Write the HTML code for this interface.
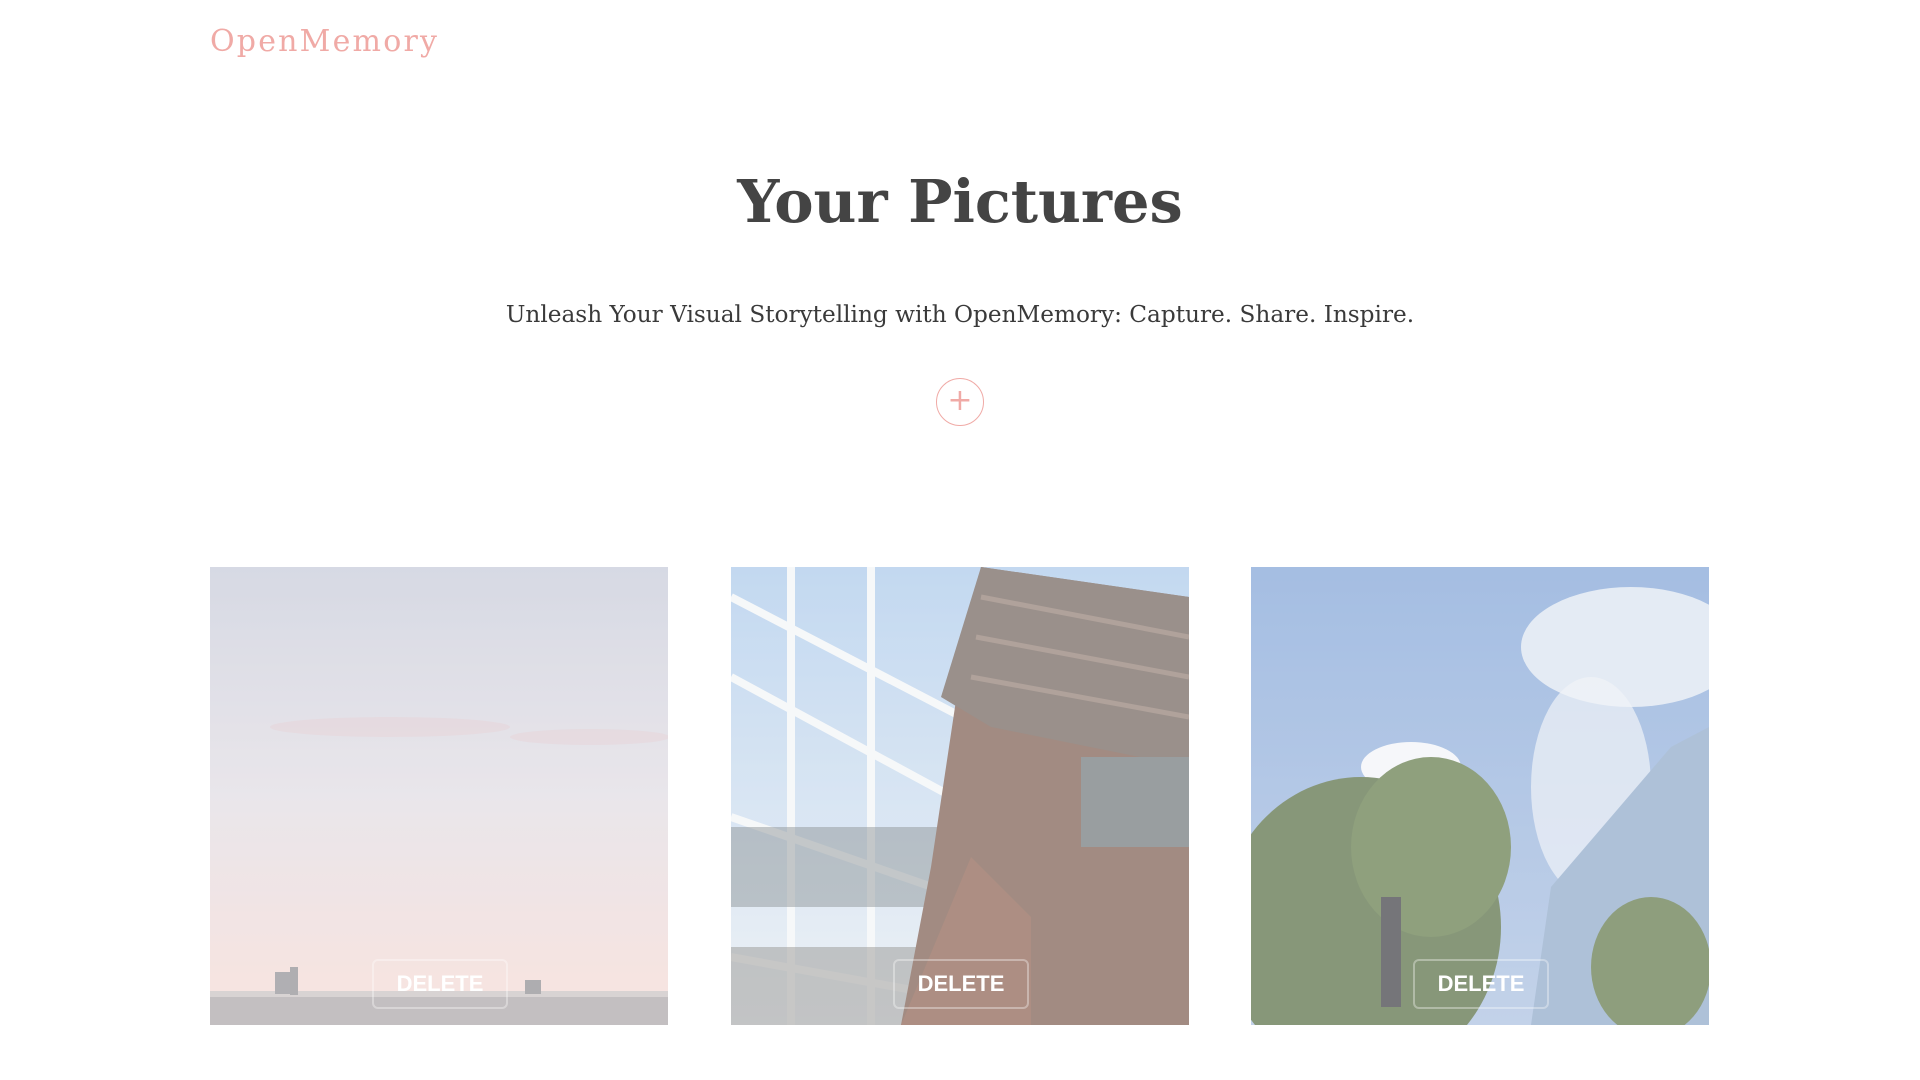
<!DOCTYPE html>
<html><head><meta charset="utf-8"><style>
html,body{margin:0;padding:0;background:#fff;width:1920px;height:1080px;overflow:hidden}
body{font-family:"DejaVu Serif","Liberation Serif",serif;position:relative}
.logo{position:absolute;left:210px;top:20px;font-size:30px;color:#f0aaa6;letter-spacing:2.2px;line-height:44px}
h1{position:absolute;left:0;width:1920px;top:160px;margin:0;text-align:center;font-size:59px;font-weight:bold;color:#444;line-height:84px}
.sub{position:absolute;left:0;width:1920px;top:297px;text-align:center;font-size:23.2px;color:#3a3a3a;line-height:36px}
.plus{position:absolute;left:936px;top:378px;width:46px;height:46px;border:1px solid #f0aaa6;border-radius:50%;color:#f0aaa6;font-size:30px;line-height:44px;text-align:center;font-family:"DejaVu Sans",sans-serif}
.card{position:absolute;top:567px;width:458px;height:458px;overflow:hidden}
.card svg{position:absolute;left:0;top:0}
.card .fade{position:absolute;inset:0;background:rgba(255,255,255,0.3)}
.del{position:absolute;left:162px;top:392px;width:132px;height:46px;border:2px solid rgba(255,255,255,0.35);border-radius:6px;color:#fff;font-family:"Liberation Sans",sans-serif;font-weight:bold;font-size:22px;line-height:46px;text-align:center}
</style></head><body>
<div class="logo">OpenMemory</div>
<h1>Your Pictures</h1>
<div class="sub">Unleash Your Visual Storytelling with OpenMemory: Capture. Share. Inspire.</div>
<div class="plus">+</div>

<div class="card" style="left:210px">
<svg width="458" height="458"><defs><linearGradient id="g1" x1="0" y1="0" x2="0" y2="1"><stop offset="0" stop-color="#c5c9d8"/><stop offset="0.5" stop-color="#e0dbe2"/><stop offset="0.9" stop-color="#f2d8d4"/></linearGradient></defs>
<rect width="458" height="458" fill="url(#g1)"/>
<ellipse cx="180" cy="160" rx="120" ry="10" fill="#dcc4cc" opacity="0.6"/>
<ellipse cx="380" cy="170" rx="80" ry="8" fill="#dcc4cc" opacity="0.6"/>
<rect x="0" y="428" width="458" height="30" fill="#a9a4a6"/>
<rect x="0" y="424" width="458" height="6" fill="#c7c0c1"/>
<rect x="65" y="405" width="22" height="22" fill="#8f8d92"/><rect x="80" y="400" width="8" height="28" fill="#8d8b90"/>
<rect x="315" y="413" width="16" height="14" fill="#8b8a8f"/>
</svg><div class="fade"></div><div class="del">DELETE</div></div>

<div class="card" style="left:731px">
<svg width="458" height="458"><defs><linearGradient id="g2" x1="0" y1="0" x2="0" y2="1"><stop offset="0" stop-color="#a9c8ea"/><stop offset="1" stop-color="#e6ecf2"/></linearGradient></defs>
<rect width="458" height="458" fill="url(#g2)"/>
<g stroke="#f3f5f7" stroke-width="8" fill="none"><path d="M0 30 L250 160"/><path d="M0 110 L240 240"/><path d="M0 250 L230 330"/><path d="M0 390 L220 430"/><path d="M60 0 V458"/><path d="M140 0 V458"/></g>
<rect x="0" y="260" width="220" height="80" fill="#5f6a6e" opacity="0.5"/>
<rect x="0" y="380" width="200" height="78" fill="#6b6a66" opacity="0.5"/>
<polygon points="250,0 458,30 458,458 170,458 200,300 230,100" fill="#7a5a4c"/>
<polygon points="250,0 458,30 458,200 260,160 210,130" fill="#6f6059"/>
<g stroke="#8e7a70" stroke-width="5"><path d="M250 30 L458 70"/><path d="M245 70 L458 110"/><path d="M240 110 L458 150"/></g>
<rect x="350" y="190" width="108" height="90" fill="#6e7578"/>
<polygon points="170,458 240,290 300,350 300,458" fill="#8a5e4e"/>
</svg><div class="fade"></div><div class="del">DELETE</div></div>

<div class="card" style="left:1251px">
<svg width="458" height="458"><defs><linearGradient id="g3" x1="0" y1="0" x2="0" y2="1"><stop offset="0" stop-color="#7ea2d6"/><stop offset="1" stop-color="#a9bfe0"/></linearGradient></defs>
<rect width="458" height="458" fill="url(#g3)"/>
<ellipse cx="380" cy="80" rx="110" ry="60" fill="#eef1f5" opacity="0.8"/>
<ellipse cx="340" cy="220" rx="60" ry="110" fill="#e9eef5" opacity="0.7"/>
<ellipse cx="160" cy="200" rx="50" ry="25" fill="#f2f4f8"/>
<ellipse cx="110" cy="360" rx="140" ry="150" fill="#536b3f"/>
<ellipse cx="180" cy="280" rx="80" ry="90" fill="#5f7746"/>
<polygon points="280,458 300,320 360,250 420,180 458,160 458,458" fill="#8ba6c8"/>
<ellipse cx="400" cy="400" rx="60" ry="70" fill="#5e7545"/>
<rect x="130" y="330" width="20" height="110" fill="#3a3a40"/>
</svg><div class="fade"></div><div class="del">DELETE</div></div>
</body></html>
